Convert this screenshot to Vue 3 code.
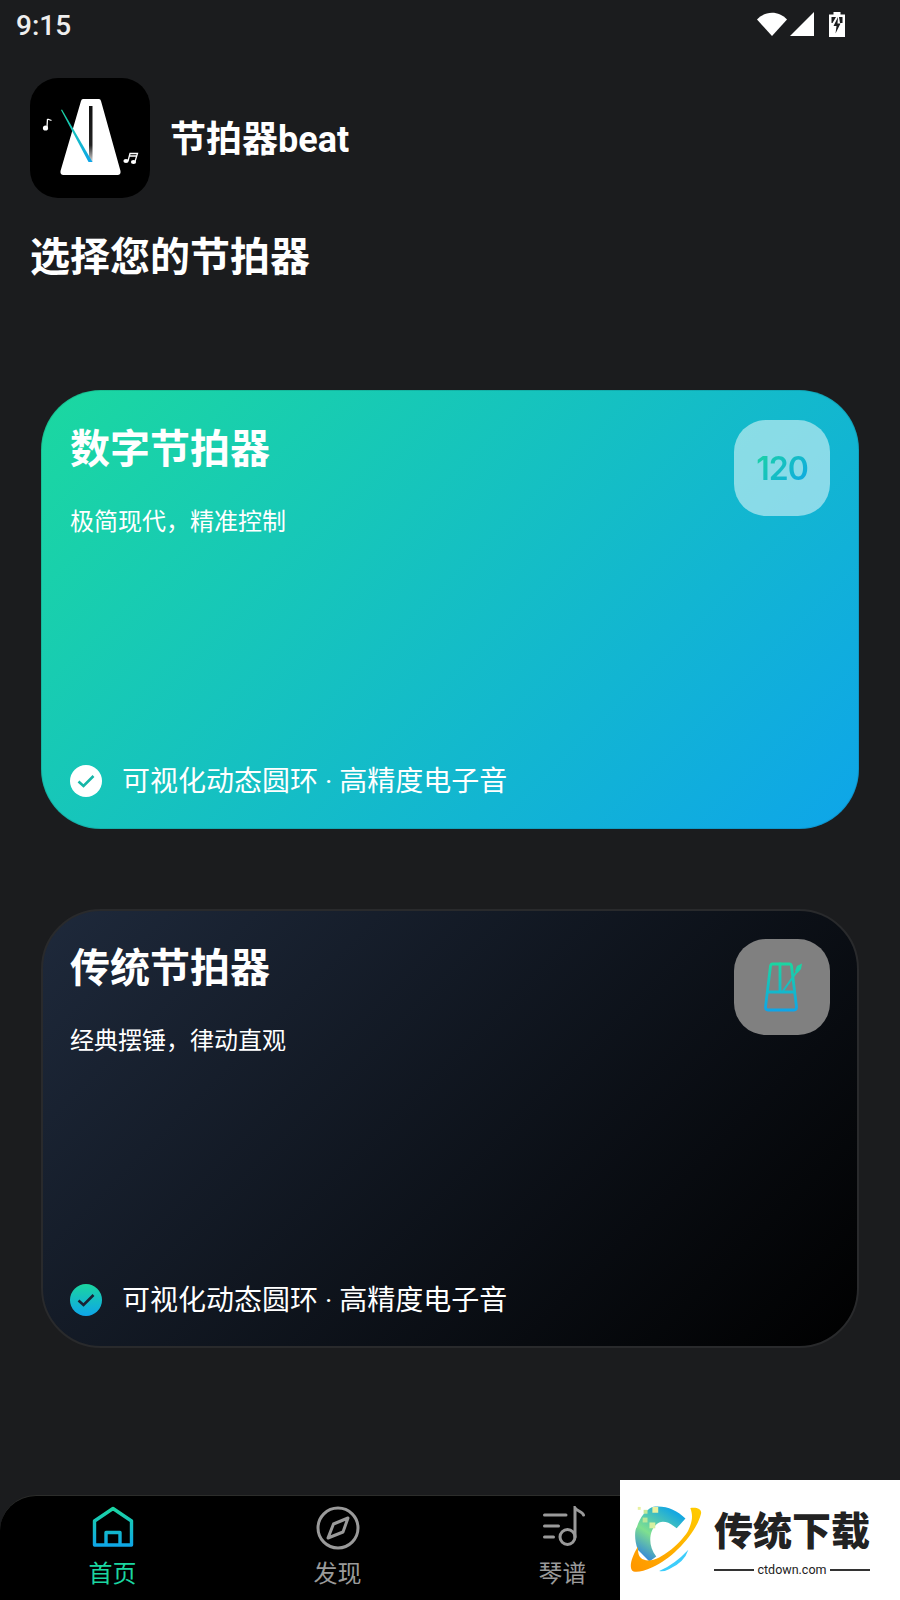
<template>
  <div class="page">
    <div class="status-bar">
      <span class="time">9:15</span>
      <div class="status-icons">
        <svg width="30" height="24" viewBox="0 0 30 24"><path d="M0 7.500C8 -1.500 22 -1.500 30 7.500L15 24Z" fill="#fff"/></svg>
        <svg width="24" height="24" viewBox="0 0 24 24"><path d="M24 0V24H0Z" fill="#fff"/></svg>
        <svg width="16" height="25" viewBox="0 0 16 25">
          <path d="M4.500 0H11.500V2.500H16V25H0V2.500H4.500Z" fill="#fff"/>
          <path d="M2.500 5H7L3.500 11H2.500ZM10 5H13.500V11H11Z" fill="#1b1c1e"/>
          <path d="M9 5L4.500 14H7.500L6.500 21.500L11.500 11.500H8.500Z" fill="#1b1c1e"/>
        </svg>
      </div>
    </div>

    <div class="app-head">
      <div class="app-icon">
        <svg width="120" height="120" viewBox="0 0 120 120">
          <defs>
            <linearGradient id="needleGrad" x1="0" y1="0" x2="0" y2="1">
              <stop offset="0" stop-color="#1bd6a0"/>
              <stop offset="1" stop-color="#0ea5e9"/>
            </linearGradient>
            <linearGradient id="slitGrad" x1="0" y1="0" x2="0" y2="1">
              <stop offset="0" stop-color="#111"/>
              <stop offset="0.7" stop-color="#222"/>
              <stop offset="1" stop-color="#ddd"/>
            </linearGradient>
          </defs>
          <path d="M53 21H69Q70.500 21 71 23L90.500 93Q91 97 87.500 97H33.500Q30 97 30.500 93L51 23Q51.500 21 53 21Z" fill="#fff"/>
          <rect x="59" y="28" width="3.500" height="56" fill="url(#slitGrad)"/>
          <path d="M31 32L32 31.500L62.500 84H58.500Z" fill="url(#needleGrad)"/>
          <path d="M17.500 41L21.500 42.500M17.500 41L17 49" stroke="#fff" stroke-width="1.300" fill="none"/>
          <circle cx="15.500" cy="50" r="2.600" fill="#fff"/>
          <path d="M98 83L100 75.500H107.500L105 83.500M99.500 78H107" stroke="#fff" stroke-width="1.300" fill="none"/>
          <ellipse cx="96" cy="83" rx="2.600" ry="2" fill="#fff"/>
          <ellipse cx="103.500" cy="84" rx="2.600" ry="2" fill="#fff"/>
        </svg>
      </div>
      <span class="app-name">节拍器beat</span>
    </div>

    <h1 class="page-title">选择您的节拍器</h1>

    <div class="cards">
      <div v-for="card in cards" :key="card.title" class="card" :class="card.type">
        <div class="card-top">
          <div>
            <div class="card-title">{{ card.title }}</div>
            <div class="card-sub">{{ card.sub }}</div>
          </div>
          <div class="badge">
            <span v-if="card.type === 'digital'" class="bpm">120</span>
            <svg v-else width="96" height="96" viewBox="0 0 96 96">
              <defs>
                <linearGradient id="metroGrad" gradientUnits="userSpaceOnUse" x1="0" y1="24" x2="0" y2="72">
                  <stop offset="0" stop-color="#1bd6a0"/>
                  <stop offset="1" stop-color="#0ea5e9"/>
                </linearGradient>
              </defs>
              <g fill="none" stroke="url(#metroGrad)" stroke-width="2.800" stroke-linejoin="round" stroke-linecap="round">
                <path d="M38.500 25H55.500Q57 25 57.500 27L62.500 68Q62.500 71 60 71H34Q31.500 71 31.500 68L36.500 27Q37 25 38.500 25Z"/>
                <path d="M46 25V53M33.500 53H60.500"/>
              </g>
              <path d="M49 52L64 31" fill="none" stroke="url(#metroGrad)" stroke-width="2"/>
              <path d="M61 32L63 27L68 24.500L67 30L63.500 34Z" fill="url(#metroGrad)"/>
            </svg>
          </div>
        </div>
        <div class="card-foot">
          <span class="check">
            <svg width="32" height="32" viewBox="0 0 32 32"><path d="M8.500 16.500L13.500 21L23.500 11" fill="none" stroke="currentColor" stroke-width="2.600"/></svg>
          </span>
          <span class="feature">可视化动态圆环 · 高精度电子音</span>
        </div>
      </div>
    </div>

    <div class="tabbar">
      <div class="tab active">
        <svg width="42" height="44" viewBox="0 0 42 44">
          <defs>
            <linearGradient id="homeGrad" gradientUnits="userSpaceOnUse" x1="0" y1="1" x2="0" y2="41">
              <stop offset="0" stop-color="#1bd6a0"/>
              <stop offset="1" stop-color="#0ea5e9"/>
            </linearGradient>
          </defs>
          <path d="M2.500 15L21 2.500L39.500 15V39H2.500ZM14 39V26.500H28V39" fill="none" stroke="url(#homeGrad)" stroke-width="3.400" stroke-linejoin="round"/>
        </svg>
        <span>首页</span>
      </div>
      <div class="tab">
        <svg width="44" height="44" viewBox="0 0 44 44" fill="none" stroke="#9a9a9a" stroke-width="3">
          <circle cx="22" cy="22" r="20"/>
          <path d="M32 12L27 26L12 32L17.500 18Z" stroke-linejoin="round"/>
        </svg>
        <span>发现</span>
      </div>
      <div class="tab">
        <svg width="44" height="44" viewBox="0 0 44 44" fill="none" stroke="#9a9a9a" stroke-width="3" stroke-linecap="round">
          <path d="M3.500 9H25M3.500 20H17.500M3.500 31H12.500"/>
          <circle cx="26.500" cy="31" r="7.500"/>
          <path d="M34 31V2C36 5 42 6 42.500 9"/>
        </svg>
        <span>琴谱</span>
      </div>
      <div></div>
    </div>

    <div class="watermark">
      <svg width="74" height="69" viewBox="0 0 74 69">
        <defs>
          <linearGradient id="wmBlue" x1="0" y1="1" x2="0.600" y2="0">
            <stop offset="0" stop-color="#1c6cf0"/>
            <stop offset="0.5" stop-color="#7fe08f"/>
            <stop offset="1" stop-color="#16a8e0"/>
          </linearGradient>
          <linearGradient id="wmOrange" x1="0" y1="1" x2="1" y2="0">
            <stop offset="0" stop-color="#ff9500"/>
            <stop offset="1" stop-color="#ffcc00"/>
          </linearGradient>
        </defs>
        <path d="M23 1C36 -1 48 4 57 13L48 23C42 18 36 15 30 17C20 22 17 40 27 52L20 57L8 45C4 34 5 24 7 22C10 12 16 4 23 1Z" fill="url(#wmBlue)"/>
        <path d="M62 2C69 1 74 3 73 8C68 28 44 54 23 63C12 68 4 69 2 66C-1 62 2 52 8 42C8 50 10 54 14 55C18 57 24 56 30 53C44 46 58 30 60 25C64 16 65 10 62 2Z" fill="url(#wmOrange)"/>
        <path d="M60 45Q56 58 40 65Q34 68 30 67Q46 60 60 45Z" fill="#3dcdfb"/>
        <rect x="8" y="1" width="3" height="3" fill="#e8f0a0"/>
        <rect x="14" y="4" width="4" height="4" fill="#c6ea9a"/>
        <rect x="23" y="1" width="6" height="6" fill="#e8f0a0"/>
        <rect x="13" y="12" width="5" height="5" fill="#b9e89a"/>
        <rect x="20" y="17" width="6" height="6" fill="#d6f0a0"/>
      </svg>
      <div class="wm-text">
        <div class="wm-name">传统下载</div>
        <div class="wm-url"><i></i><span>ctdown.com</span><i></i></div>
      </div>
    </div>
  </div>
</template>

<script setup>
const cards = [
  { type: 'digital', title: '数字节拍器', sub: '极简现代，精准控制' },
  { type: 'classic', title: '传统节拍器', sub: '经典摆锤，律动直观' }
]
</script>

<style>
body {
  background: #1b1c1e;
}
</style>

<style scoped>
.page {
  position: relative;
  width: 900px;
  height: 1600px;
  overflow: hidden;
  display: flex;
  flex-direction: column;
  background: #1b1c1e;
  color: #fff;
  font-family: Roboto, "Noto Sans CJK SC", sans-serif;
}

.status-bar {
  height: 50px;
  box-sizing: border-box;
  padding: 0 55px 2px 16px;
  display: flex;
  align-items: center;
  justify-content: space-between;
  flex-shrink: 0;
}

.time {
  font-size: 28px;
  font-weight: 500;
  color: #eee;
  margin-top: 2px;
}

.status-icons {
  display: flex;
  align-items: center;
  gap: 3px;
}

.status-icons svg + svg + svg {
  margin-left: 12px;
}

.app-head {
  margin-top: 28px;
  padding-left: 30px;
  display: flex;
  align-items: center;
  gap: 20px;
}

.app-icon {
  width: 120px;
  height: 120px;
  border-radius: 28px;
  background: #000;
  flex-shrink: 0;
}

.app-name {
  font-size: 36px;
  font-weight: 700;
  margin-bottom: 4px;
}

.page-title {
  margin: 32px 0 0 30px;
  font-size: 40px;
  line-height: 56px;
  font-weight: 700;
}

.cards {
  margin-top: 104px;
  padding: 0 41px;
  display: flex;
  flex-direction: column;
  gap: 80px;
}

.card {
  height: 439px;
  box-sizing: border-box;
  border-radius: 60px;
  padding: 30px 29px 27px 29px;
  display: flex;
  flex-direction: column;
  justify-content: space-between;
}

.digital {
  background: linear-gradient(135deg, #1bd8a0 0%, #0ea5e9 100%);
  box-shadow: inset 0 0 0 1px rgba(0, 0, 0, 0.1);
}

.classic {
  background: linear-gradient(135deg, #1e293b 0%, #000 100%);
  border: 2px solid #292a2c;
  padding: 28px 27px 25px 27px;
}

.card-top {
  display: flex;
  justify-content: space-between;
  align-items: flex-start;
}

.card-title {
  margin-top: 2px;
  font-size: 40px;
  line-height: 56px;
  font-weight: 700;
}

.card-sub {
  margin-top: 28px;
  font-size: 24px;
  line-height: 32px;
}

.badge {
  width: 96px;
  height: 96px;
  border-radius: 32px;
  display: flex;
  align-items: center;
  justify-content: center;
  background: rgba(255, 255, 255, 0.5);
}

.classic .badge {
  background: #808080;
}

.bpm {
  font-family: Inter, sans-serif;
  font-size: 32px;
  font-weight: 600;
  letter-spacing: -1px;
  background: linear-gradient(135deg, #1bd6a0, #0ea5e9);
  -webkit-background-clip: text;
  background-clip: text;
  color: transparent;
}

.card-foot {
  display: flex;
  align-items: center;
  gap: 20px;
}

.check {
  width: 32px;
  height: 32px;
  border-radius: 50%;
  background: #fff;
  color: #16b6a8;
  display: flex;
  margin-top: -2px;
}

.classic .check {
  background: linear-gradient(180deg, #1bd6a0, #0ea5e9);
  color: #1a2233;
}

.feature {
  font-size: 28px;
  line-height: 40px;
}

.tabbar {
  position: absolute;
  left: 0;
  right: 0;
  bottom: 0;
  height: 105px;
  box-sizing: border-box;
  background: #000;
  border-top: 1px solid #2c2d2b;
  border-radius: 36px 36px 0 0;
  padding-top: 10px;
  display: grid;
  grid-template-columns: repeat(4, 225px);
}

.tab {
  display: flex;
  flex-direction: column;
  align-items: center;
  gap: 8px;
  font-size: 24px;
  line-height: 32px;
  color: #9a9a9a;
}

.tab.active {
  color: #1bd6a0;
}

.watermark {
  position: absolute;
  right: 0;
  bottom: 0;
  width: 280px;
  height: 120px;
  box-sizing: border-box;
  background: #fff;
  padding: 25px 30px 0 10px;
  display: flex;
  align-items: flex-start;
  gap: 12px;
}

.wm-text {
  flex: 1;
  margin-top: 3px;
  color: #222;
}

.wm-name {
  font-size: 39px;
  line-height: 48px;
  font-weight: 900;
  white-space: nowrap;
}

.wm-url {
  margin-top: 7px;
  display: flex;
  align-items: center;
  gap: 3px;
  font-size: 12.500px;
  line-height: 14px;
}

.wm-url i {
  flex: 1;
  height: 2px;
  background: #333;
}
</style>
